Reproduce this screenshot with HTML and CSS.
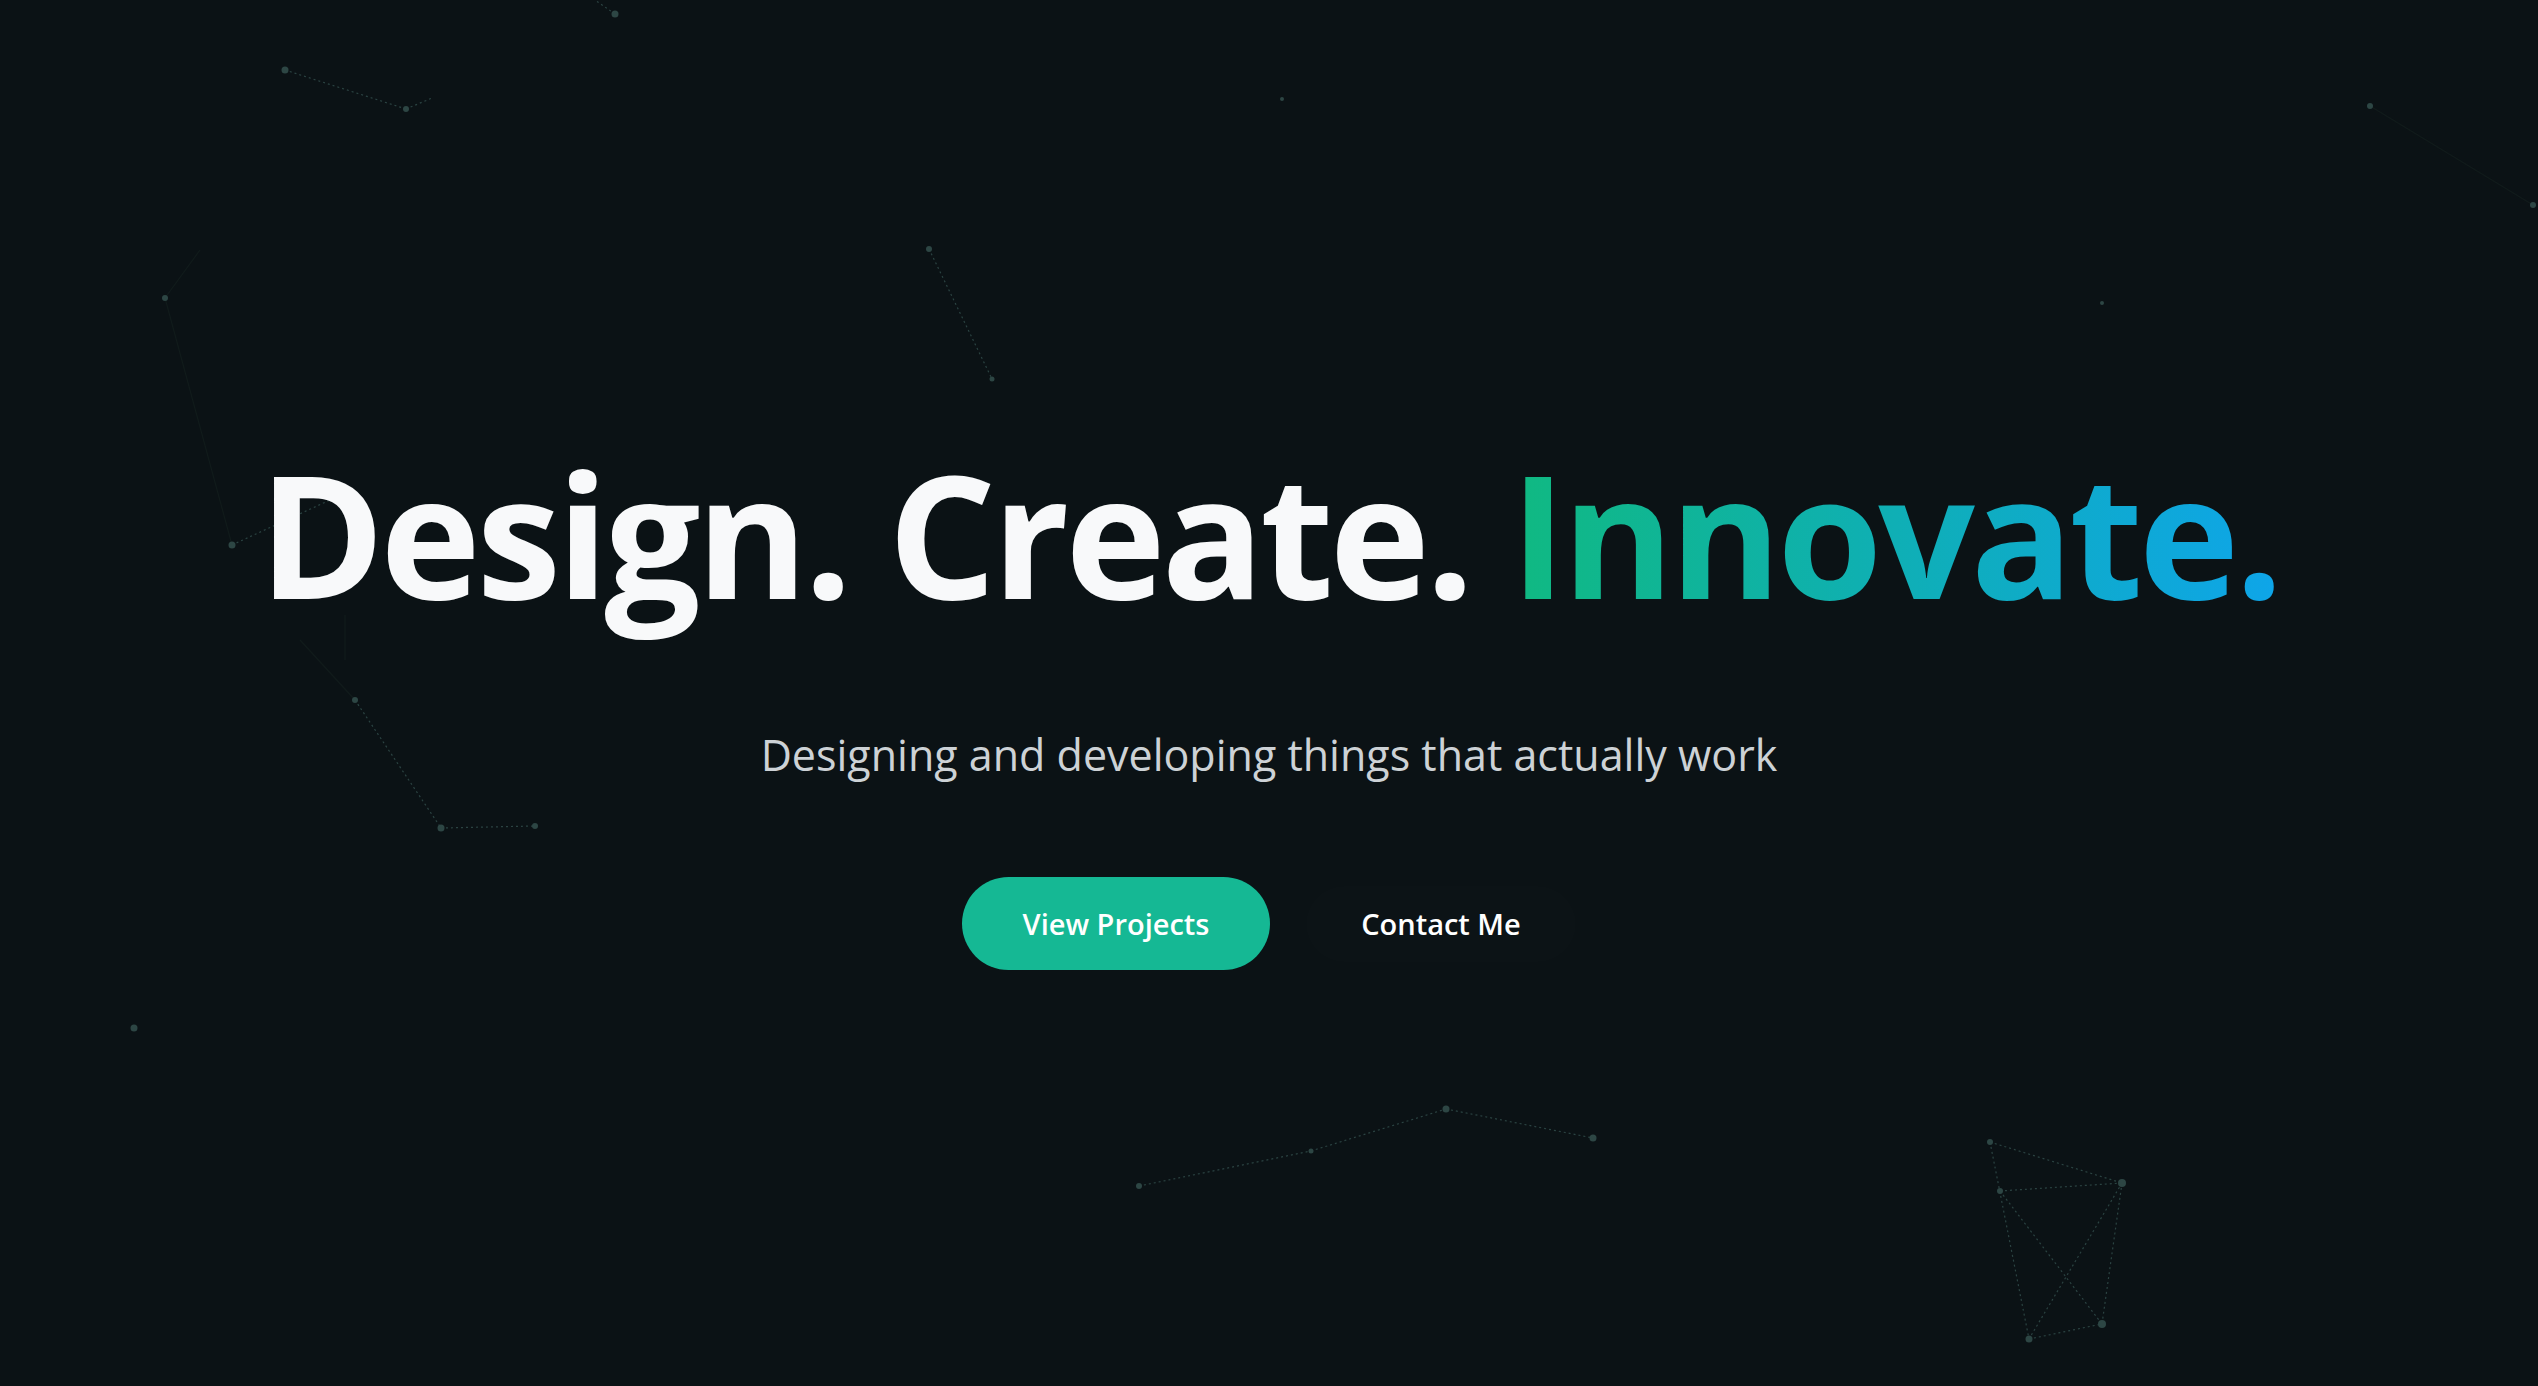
FILE: index.html
```html
<!DOCTYPE html>
<html lang="en">
<head>
<meta charset="utf-8">
<title>Design. Create. Innovate.</title>
<link rel="stylesheet" href="styles.css">
</head>
<body>
<main class="hero">
  <svg class="network" width="2538" height="1386" viewBox="0 0 2538 1386" aria-hidden="true">
    <g class="links">
      <line x1="285" y1="70" x2="406" y2="109"/>
      <line x1="406" y1="109" x2="432" y2="98"/>
      <line x1="615" y1="14" x2="595" y2="0"/>
      <line x1="929" y1="249" x2="992" y2="379"/>
      <line x1="355" y1="700" x2="441" y2="828"/>
      <line x1="441" y1="828" x2="535" y2="826"/>
      <line x1="232" y1="545" x2="330" y2="500"/>
      <line x1="1139" y1="1186" x2="1311" y2="1151"/>
      <line x1="1311" y1="1151" x2="1446" y2="1109"/>
      <line x1="1446" y1="1109" x2="1593" y2="1138"/>
      <line x1="1990" y1="1142" x2="2122" y2="1183"/>
      <line x1="2000" y1="1191" x2="2122" y2="1183"/>
      <line x1="1990" y1="1142" x2="2029" y2="1339"/>
      <line x1="2000" y1="1191" x2="2102" y2="1324"/>
      <line x1="2122" y1="1183" x2="2029" y2="1339"/>
      <line x1="2122" y1="1183" x2="2102" y2="1324"/>
      <line x1="2029" y1="1339" x2="2102" y2="1324"/>
    </g>
    <g class="links faint">
      <line x1="2370" y1="106" x2="2533" y2="205"/>
      <line x1="200" y1="250" x2="165" y2="298"/>
      <line x1="165" y1="298" x2="232" y2="545"/>
      <line x1="300" y1="640" x2="355" y2="700"/>
      <line x1="345" y1="615" x2="345" y2="660"/>
    </g>
    <g class="nodes">
      <circle cx="285" cy="70" r="3.5"/>
      <circle cx="406" cy="109" r="3"/>
      <circle cx="615" cy="14" r="3.5"/>
      <circle cx="929" cy="249" r="3"/>
      <circle cx="992" cy="379" r="2.5"/>
      <circle cx="1282" cy="99" r="2"/>
      <circle cx="165" cy="298" r="3"/>
      <circle cx="232" cy="545" r="3.5"/>
      <circle cx="355" cy="700" r="3"/>
      <circle cx="441" cy="828" r="3.5"/>
      <circle cx="535" cy="826" r="3"/>
      <circle cx="134" cy="1028" r="3.5"/>
      <circle cx="2370" cy="106" r="3"/>
      <circle cx="2533" cy="205" r="3"/>
      <circle cx="2102" cy="303" r="2"/>
      <circle cx="1139" cy="1186" r="3"/>
      <circle cx="1311" cy="1151" r="2.5"/>
      <circle cx="1446" cy="1109" r="3.5"/>
      <circle cx="1593" cy="1138" r="3.5"/>
      <circle cx="1990" cy="1142" r="3"/>
      <circle cx="2000" cy="1191" r="3"/>
      <circle cx="2122" cy="1183" r="4"/>
      <circle cx="2102" cy="1324" r="4"/>
      <circle cx="2029" cy="1339" r="3.5"/>
    </g>
  </svg>
  <div class="content">
    <h1 class="title">Design. Create. <span class="accent">Innovate.</span></h1>
    <p class="subtitle">Designing and developing things that actually work</p>
    <div class="actions">
      <a class="btn btn-primary" href="#projects">View Projects</a>
      <a class="btn btn-ghost" href="#contact">Contact Me</a>
    </div>
  </div>
</main>
</body>
</html>
```

FILE: styles.css
```css
* { box-sizing: border-box; }

html, body {
  margin: 0;
  padding: 0;
  height: 100%;
  background: #0b1215;
}

body {
  font-family: "Open Sans", "Noto Sans", "Liberation Sans", sans-serif;
  color: #f8f9fa;
  overflow: hidden;
}

.hero {
  position: relative;
  width: 100%;
  height: 100vh;
  display: flex;
  align-items: center;
  justify-content: center;
}

.network {
  position: absolute;
  left: 0;
  top: 0;
}

.links line {
  stroke: #2b4342;
  stroke-width: 1.2;
  stroke-dasharray: 2 3;
}

.links.faint line {
  stroke: #111b1b;
  stroke-dasharray: none;
}

.nodes circle {
  fill: #2d4644;
}

.content {
  position: relative;
  display: flex;
  flex-direction: column;
  align-items: center;
  margin-top: 20px;
}

.title {
  margin: 0;
  font-size: 170px;
  font-weight: 700;
  line-height: 1.15;
  letter-spacing: -4.2px;
  color: #f8f9fa;
  white-space: nowrap;
}

.accent {
  background: linear-gradient(90deg, #10b981 0%, #0ea5e9 100%);
  -webkit-background-clip: text;
  background-clip: text;
  color: transparent;
}

.subtitle {
  margin: 94px 0 0;
  font-size: 43px;
  font-weight: 400;
  color: #cdd2d6;
  letter-spacing: 0;
}

.actions {
  display: flex;
  gap: 36px;
  margin-top: 93px;
}

.btn {
  display: flex;
  align-items: center;
  justify-content: center;
  height: 93px;
  border-radius: 47px;
  font-size: 29px;
  font-weight: 600;
  color: #ffffff;
  text-decoration: none;
}

.btn-primary {
  width: 308px;
  background: #15b894;
}

.btn-ghost {
  width: 270px;
  height: 76px;
  background: rgba(255, 255, 255, 0.008);
  border-radius: 38px;
  align-self: center;
}
```
